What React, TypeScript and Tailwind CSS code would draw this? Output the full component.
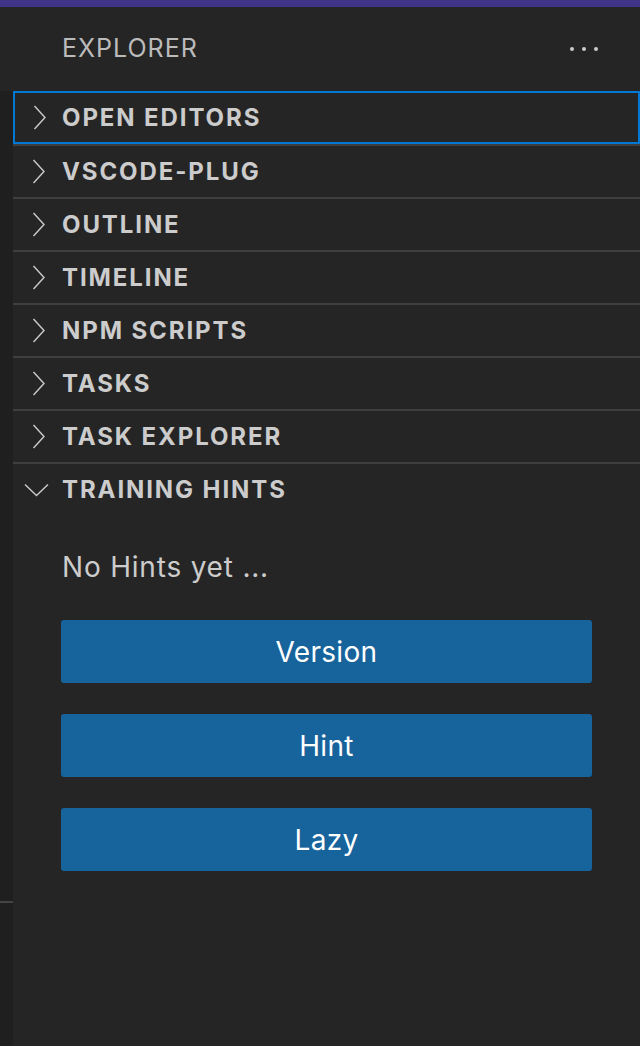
const sections = ["OPEN EDITORS", "VSCODE-PLUG", "OUTLINE", "TIMELINE", "NPM SCRIPTS", "TASKS", "TASK EXPLORER"];

function Header({ title, open, focused }: { title: string; open?: boolean; focused?: boolean }) {
  return (
    <div
      className={
        focused
          ? "h-[53px] flex items-center border-2 border-[#0078d4]"
          : "h-[53px] flex items-center border-t-2 border-[#3f3f3f]"
      }
    >
      <div className={focused ? "w-[47px] flex justify-center" : "w-[49px] flex justify-center"}>
        {open ? (
          <svg width="25" height="14" viewBox="0 0 25 14" className="mr-[2px]">
            <polyline points="1,1.5 12.5,12.5 24,1.5" fill="none" stroke="#cccccc" strokeWidth="1.4" />
          </svg>
        ) : (
          <svg width="13" height="25" viewBox="0 0 13 25" className={focused ? "ml-[1px]" : "ml-[2px]"}>
            <polyline points="1.5,1 12,12.5 1.5,24" fill="none" stroke="#cccccc" strokeWidth="1.4" />
          </svg>
        )}
      </div>
      <span className="text-[24px] font-bold tracking-[1.9px] text-[#cccccc]">{title}</span>
    </div>
  );
}

export default function App() {
  return (
    <main className="w-[640px] h-[1046px] bg-[#252526] flex flex-col overflow-hidden" style={{ fontFamily: "Inter, 'Noto Sans', sans-serif" }}>
      <div className="h-[7px] bg-[#403488]" />
      <div className="h-[84px] flex items-center justify-between pl-[62px] pr-[42px]">
        <span className="text-[25px] text-[#bbbbbb] tracking-[1px]">EXPLORER</span>
        <div className="flex gap-[8px]">
          <span className="w-[4px] h-[4px] rounded-full bg-[#cccccc]" />
          <span className="w-[4px] h-[4px] rounded-full bg-[#cccccc]" />
          <span className="w-[4px] h-[4px] rounded-full bg-[#cccccc]" />
        </div>
      </div>
      <div className="flex flex-1">
        <div className="w-[13px] bg-[#1f1f1f] flex flex-col">
          <div className="h-[810px]" />
          <div className="h-[2px] bg-[#444444]" />
        </div>
        <div className="flex-1 flex flex-col">
          {sections.map((s, i) => (
            <Header key={s} title={s} focused={i === 0} />
          ))}
          <Header title="TRAINING HINTS" open />
          <div className="px-[48px] pt-[37px]">
            <p className="pl-[1px] text-[28px] leading-[30px] tracking-[0.8px] text-[#cccccc]">No Hints yet ...</p>
            <div className="mt-[38px] flex flex-col gap-[31px]">
              {["Version", "Hint", "Lazy"].map((b) => (
                <button key={b} className="h-[63px] w-full rounded-[3px] bg-[#17639b] text-white text-[28px] tracking-[0.3px]">
                  {b}
                </button>
              ))}
            </div>
          </div>
        </div>
      </div>
    </main>
  );
}
